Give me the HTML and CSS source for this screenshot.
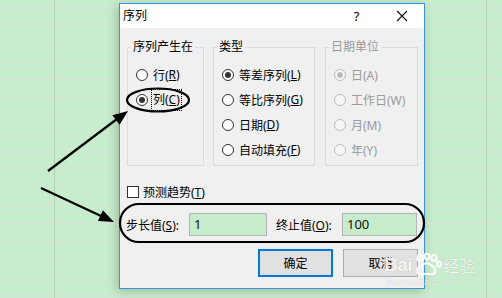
FILE: index.html
```html
<!DOCTYPE html>
<html lang="zh-CN">
<head>
    <meta charset="UTF-8">
    <meta name="viewport" content="width=device-width, initial-scale=1.0">
    <title>序列</title>
    <link rel="stylesheet" href="styles.css">
</head>
<body>
    <div class="dialog">
        <div class="titlebar">
            <span class="title">序列</span>
            <span class="tb-btn help">?</span>
            <span class="tb-btn close">
                <svg width="12" height="12" viewBox="0 0 12 12"><path d="M1 1 L11 11 M11 1 L1 11" stroke="#111" stroke-width="1.1" fill="none"/></svg>
            </span>
        </div>
        <div class="body">
            <div class="groups">
                <fieldset class="group g1">
                    <legend>序列产生在</legend>
                    <div class="opt"><span class="radio"></span>行(<u>R</u>)</div>
                    <div class="opt"><span class="radio on"></span><span class="focus">列(<u>C</u>)</span></div>
                </fieldset>
                <fieldset class="group g2">
                    <legend>类型</legend>
                    <div class="opt"><span class="radio on"></span>等差序列(<u>L</u>)</div>
                    <div class="opt"><span class="radio"></span>等比序列(<u>G</u>)</div>
                    <div class="opt"><span class="radio"></span>日期(<u>D</u>)</div>
                    <div class="opt"><span class="radio"></span>自动填充(<u>F</u>)</div>
                </fieldset>
                <fieldset class="group g3 off">
                    <legend>日期单位</legend>
                    <div class="opt"><span class="radio on"></span>日(A)</div>
                    <div class="opt"><span class="radio"></span>工作日(W)</div>
                    <div class="opt"><span class="radio"></span>月(M)</div>
                    <div class="opt"><span class="radio"></span>年(Y)</div>
                </fieldset>
            </div>
            <div class="check"><span class="box"></span>预测趋势(<u>T</u>)</div>
            <div class="values">
                <span class="lbl lbl-step">步长值(<u>S</u>):</span>
                <span class="field f-step">1</span>
                <span class="lbl lbl-stop">终止值(<u>O</u>):</span>
                <span class="field f-stop">100</span>
            </div>
            <div class="buttons">
                <span class="btn default">确定</span>
                <span class="btn">取消</span>
            </div>
        </div>
    </div>

    <svg class="marks" width="502" height="298" viewBox="0 0 502 298">
        <ellipse cx="158" cy="100" rx="31" ry="11.5" fill="none" stroke="#000" stroke-width="2.2"/>
        <rect x="120" y="204" width="304" height="38" rx="19" ry="19" fill="none" stroke="#000" stroke-width="2.2"/>
        <line x1="48" y1="171" x2="117" y2="119" stroke="#000" stroke-width="2.2"/>
        <polygon points="128,111 119.6,124.8 112.4,115.2" fill="#000"/>
        <line x1="41" y1="188" x2="101" y2="216" stroke="#000" stroke-width="2.2"/>
        <polygon points="114,222 97.9,221.1 102.9,210.3" fill="#000"/>
    </svg>

    <div class="wm">
        <div class="wm-logo">
            <span class="wm-bai">Bai</span>
            <svg width="30" height="24" viewBox="0 0 30 24">
                <g fill="none" stroke="#fff" stroke-width="2">
                    <ellipse cx="8" cy="5" rx="2.5" ry="3"/>
                    <ellipse cx="15" cy="3.5" rx="2.5" ry="3"/>
                    <ellipse cx="22" cy="5" rx="2.5" ry="3"/>
                    <ellipse cx="27" cy="11" rx="2" ry="2.5"/>
                    <path d="M8 21 C4 21 4 15 9 13 C12 10 16 9 19 12 C24 15 25 21 20 21 Z"/>
                </g>
            </svg>
            <span class="wm-jy">经验</span>
        </div>
        <div class="wm-url">jingyan.baidu.com</div>
    </div>
</body>
</html>
```

FILE: styles.css
```css
* {
    box-sizing: border-box;
}
body {
    margin: 0;
    width: 502px;
    height: 298px;
    overflow: hidden;
    position: relative;
    font-family: "Noto Sans", "Noto Sans CJK SC", sans-serif;
    font-size: 12px;
    color: #000;
    background-color: #c7edcc;
    background-image:
        linear-gradient(90deg, transparent 54px, #b3d3b7 54px, #b3d3b7 55px, transparent 55px, transparent 486px, #b3d3b7 486px, #b3d3b7 487px, transparent 487px),
        repeating-linear-gradient(180deg, transparent 0, transparent 7px, #d6e4d7 7px, #d6e4d7 8px, transparent 8px, transparent 18px);
}
u {
    text-decoration: underline;
    text-underline-offset: 1px;
}
.dialog {
    position: absolute;
    left: 119px;
    top: 3px;
    width: 306px;
    height: 286px;
    border: 1px solid #3d95cf;
    background: #f0f0f0;
    box-shadow: -2px 2px 10px rgba(0, 0, 0, 0.22);
}
.titlebar {
    height: 24px;
    background: #fff;
    display: flex;
    align-items: center;
}
.title {
    flex: 1;
    padding-left: 3px;
    line-height: 24px;
}
.tb-btn {
    width: 45px;
    height: 24px;
    display: flex;
    align-items: center;
    justify-content: center;
}
.help {
    font-size: 13px;
}
.body {
    padding: 11px 6px 0 7px;
}
.groups {
    display: flex;
}
.group {
    margin: 0;
    min-width: 0;
    border: 1px solid #dcdcdc;
    padding: 7px 2px 3px 8px;
}
.group legend {
    padding: 0 2px;
    margin-left: -5px;
    line-height: 16px;
}
.g1 {
    width: 77px;
}
.g2 {
    width: 102px;
    margin-left: 9px;
}
.g3 {
    width: 93px;
    margin-left: 10px;
}
.opt {
    display: flex;
    align-items: center;
    height: 25px;
    white-space: nowrap;
}
.radio {
    flex: none;
    position: relative;
    width: 12px;
    height: 12px;
    margin-right: 5px;
    border: 1px solid #333;
    border-radius: 50%;
    background: #fff;
}
.radio.on::after {
    content: "";
    position: absolute;
    left: 2px;
    top: 2px;
    width: 6px;
    height: 6px;
    border-radius: 50%;
    background: #333;
}
.focus {
    outline: 1px dotted #000;
    line-height: 20px;
    padding: 0 1px;
    margin-left: -1px;
}
.off {
    color: #9a9a9a;
}
.off .radio {
    border-color: #bcbcbc;
    background: #f7f7f7;
}
.off .radio.on::after {
    background: #bcbcbc;
}
.check {
    display: flex;
    align-items: center;
    height: 16px;
    margin-top: 18px;
}
.box {
    width: 12px;
    height: 12px;
    margin-right: 4px;
    border: 1px solid #333;
    background: #fff;
}
.values {
    display: flex;
    align-items: center;
    height: 23px;
    margin-top: 13px;
}
.lbl {
    white-space: nowrap;
}
.lbl-step {
    width: 63px;
    margin-left: -1px;
}
.lbl-stop {
    width: 66px;
    margin-left: 9px;
}
.field {
    height: 23px;
    line-height: 21px;
    padding-left: 4px;
    border: 1px solid #b4b4b4;
    background: #c6eccb;
    font-size: 13px;
    color: #111;
}
.f-step {
    width: 78px;
}
.f-stop {
    width: 75px;
}
.buttons {
    display: flex;
    justify-content: flex-end;
    gap: 10px;
    margin-top: 13px;
}
.btn {
    width: 75px;
    height: 28px;
    display: flex;
    align-items: center;
    justify-content: center;
    background: #e1e1e1;
    border: 1px solid #adadad;
}
.btn.default {
    border: 2px solid #0078d7;
}
.marks {
    position: absolute;
    left: 0;
    top: 0;
    pointer-events: none;
}
.wm {
    position: absolute;
    left: 384px;
    top: 253px;
    color: rgba(255, 255, 255, 0.9);
    text-shadow: 0 0 1px rgba(0, 0, 0, 0.25);
}
.wm-logo {
    display: flex;
    align-items: center;
    height: 24px;
}
.wm-bai {
    font-family: "Liberation Sans", sans-serif;
    font-size: 19px;
    font-weight: bold;
    letter-spacing: -0.5px;
}
.wm-jy {
    font-family: "Noto Sans CJK SC", sans-serif;
    font-size: 16px;
    margin-left: 1px;
}
.wm-url {
    font-family: "Liberation Sans", sans-serif;
    font-size: 9px;
    padding-left: 4px;
    opacity: 0.7;
}
```
